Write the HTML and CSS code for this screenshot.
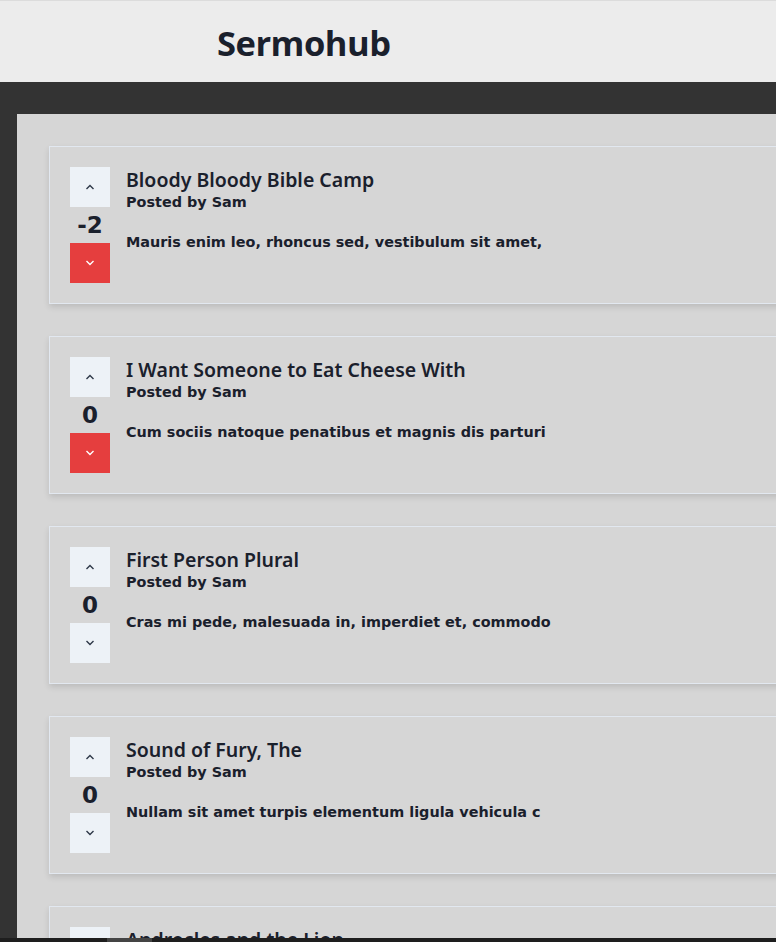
FILE: index.html
```html
<!DOCTYPE html>
<html>
<head>
<meta charset="utf-8">
<link rel="stylesheet" href="styles.css">
</head>
<body>
<header class="topbar">
  <h1 class="brand">Sermohub</h1>
</header>
<main class="stage">
  <section class="panel">
    <article class="card">
      <div class="vote">
        <button class="vbtn"><svg viewBox="0 0 10 6" class="chev"><path d="M1.5 5 L5 1.5 L8.5 5"/></svg></button>
        <span class="count">-2</span>
        <button class="vbtn active"><svg viewBox="0 0 10 6" class="chev"><path d="M1.5 1 L5 4.5 L8.5 1"/></svg></button>
      </div>
      <div class="content">
        <h2 class="title">Bloody Bloody Bible Camp</h2>
        <p class="author">Posted by Sam</p>
        <p class="body">Mauris enim leo, rhoncus sed, vestibulum sit amet,</p>
      </div>
    </article>
    <article class="card">
      <div class="vote">
        <button class="vbtn"><svg viewBox="0 0 10 6" class="chev"><path d="M1.5 5 L5 1.5 L8.5 5"/></svg></button>
        <span class="count">0</span>
        <button class="vbtn active"><svg viewBox="0 0 10 6" class="chev"><path d="M1.5 1 L5 4.5 L8.5 1"/></svg></button>
      </div>
      <div class="content">
        <h2 class="title">I Want Someone to Eat Cheese With</h2>
        <p class="author">Posted by Sam</p>
        <p class="body">Cum sociis natoque penatibus et magnis dis parturi</p>
      </div>
    </article>
    <article class="card">
      <div class="vote">
        <button class="vbtn"><svg viewBox="0 0 10 6" class="chev"><path d="M1.5 5 L5 1.5 L8.5 5"/></svg></button>
        <span class="count">0</span>
        <button class="vbtn"><svg viewBox="0 0 10 6" class="chev"><path d="M1.5 1 L5 4.5 L8.5 1"/></svg></button>
      </div>
      <div class="content">
        <h2 class="title">First Person Plural</h2>
        <p class="author">Posted by Sam</p>
        <p class="body">Cras mi pede, malesuada in, imperdiet et, commodo</p>
      </div>
    </article>
    <article class="card">
      <div class="vote">
        <button class="vbtn"><svg viewBox="0 0 10 6" class="chev"><path d="M1.5 5 L5 1.5 L8.5 5"/></svg></button>
        <span class="count">0</span>
        <button class="vbtn"><svg viewBox="0 0 10 6" class="chev"><path d="M1.5 1 L5 4.5 L8.5 1"/></svg></button>
      </div>
      <div class="content">
        <h2 class="title">Sound of Fury, The</h2>
        <p class="author">Posted by Sam</p>
        <p class="body">Nullam sit amet turpis elementum ligula vehicula c</p>
      </div>
    </article>
    <article class="card">
      <div class="vote">
        <button class="vbtn"><svg viewBox="0 0 10 6" class="chev"><path d="M1.5 5 L5 1.5 L8.5 5"/></svg></button>
        <span class="count">0</span>
        <button class="vbtn"><svg viewBox="0 0 10 6" class="chev"><path d="M1.5 1 L5 4.5 L8.5 1"/></svg></button>
      </div>
      <div class="content">
        <h2 class="title">Androcles and the Lion</h2>
        <p class="author">Posted by Sam</p>
        <p class="body">Lorem ipsum dolor sit amet, consectetuer adipiscing</p>
      </div>
    </article>
  </section>
</main>
<div class="hscroll"><div class="thumb"></div></div>
</body>
</html>
```
FILE: styles.css
```css
* { box-sizing: border-box; }
html, body { margin: 0; padding: 0; overflow: hidden; height: 100%; }
body { background: #333333; font-family: "Noto Sans", "Open Sans", sans-serif; color: #1a202c; }

.topbar {
  height: 82px;
  background: #ececec;
  border-top: 1px solid #dcdcdc;
  display: flex;
  align-items: center;
  padding-left: 217px;
}
.brand {
  margin: 0;
  font-family: "Open Sans", sans-serif;
  font-weight: 700;
  font-size: 34.5px;
  letter-spacing: -0.5px;
  color: #1a202c;
  padding-top: 2px;
}

.stage {
  padding: 32px 0 0 17px;
  width: 1300px;
}
.panel {
  background: #d6d6d6;
  padding: 32px;
  display: flex;
  flex-direction: column;
  gap: 32px;
  min-height: 1200px;
}
.card {
  border: 1px solid #e2e8f0;
  box-shadow: 0 3px 6px rgba(0,0,0,0.12);
  padding: 20px;
  display: flex;
  gap: 16px;
  height: 158px;
}
.vote {
  width: 40px;
  display: flex;
  flex-direction: column;
  align-items: center;
}
.vbtn {
  width: 40px;
  height: 40px;
  border: 0;
  padding: 0;
  background: #edf2f7;
  display: flex;
  align-items: center;
  justify-content: center;
}
.vbtn.active { background: #e53e3e; }
.chev { width: 10px; height: 6px; fill: none; stroke: #2d3748; stroke-width: 1.4; }
.vbtn.active .chev { stroke: #ffffff; }
.count {
  height: 36px;
  display: flex;
  align-items: center;
  font-family: "DejaVu Sans", sans-serif;
  font-weight: 700;
  font-size: 23px;
  color: #1a202c;
}
.content { display: flex; flex-direction: column; }
.title {
  margin: 0;
  font-family: "Noto Sans", sans-serif;
  font-weight: 600;
  font-size: 19.5px;
  line-height: 25px;
}
.author {
  margin: 0;
  font-family: "DejaVu Sans", sans-serif;
  font-weight: 700;
  font-size: 14.4px;
  line-height: 20px;
}
.body {
  margin: 20px 0 0;
  font-family: "DejaVu Sans", sans-serif;
  font-weight: 700;
  font-size: 14.4px;
  line-height: 20px;
}
.hscroll {
  position: fixed;
  left: 0; right: 0; bottom: 0;
  height: 4px;
  background: #1e1e1e;
}
.thumb { margin-left: 107px; width: 45px; height: 4px; background: #444; }
```
